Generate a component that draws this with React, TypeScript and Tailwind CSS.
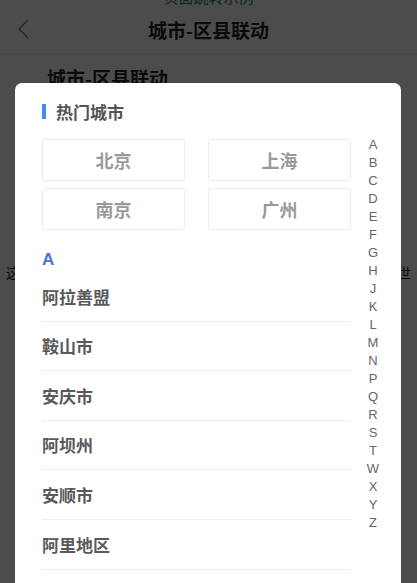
import React from "react";

const hot = ["北京", "上海", "南京", "广州"];
const cities = ["阿拉善盟", "鞍山市", "安庆市", "阿坝州", "安顺市", "阿里地区", "鞍山市"];
const letters = ["A","B","C","D","E","F","G","H","J","K","L","M","N","P","Q","R","S","T","W","X","Y","Z"];

export default function App() {
  return (
    <div className="relative w-[417px] h-[583px] overflow-hidden bg-white font-['Noto_Sans_CJK_SC','Liberation_Sans',sans-serif]">
      {/* background page */}
      <div className="flex flex-col">
        <div className="h-[6px] overflow-hidden flex justify-center">
          <span className="-mt-[12px] text-[15px] text-[#2a8a3a] leading-[18px]">页面跳转示例</span>
        </div>
        <div className="relative h-[49px] flex items-center justify-center border-b border-[#eee]">
          <svg className="absolute left-[16px] top-[12px]" width="14" height="22" viewBox="0 0 14 22" fill="none">
            <path d="M12 2 L3 11 L12 20" stroke="#777" strokeWidth="1.3" />
          </svg>
          <span className="text-[19px] font-bold text-[#222]">城市-区县联动</span>
        </div>
        <div className="pl-[47px] pt-[10px] text-[19px] font-bold text-[#222] leading-[26px]">城市-区县联动</div>
        <div className="mt-[171px] px-[6px] h-[20px] overflow-hidden text-[14px] leading-[20px] text-[#222] text-justify [text-align-last:justify]">
          这是一个城市区县联动的组件示例选择城市之后再选择区县的世
        </div>
      </div>

      {/* overlay */}
      <div className="absolute inset-0 bg-black/70" />

      {/* modal */}
      <div className="absolute left-[15px] top-[83px] w-[386px] h-[520px] bg-white rounded-[7px] pl-[27px] pt-[20px] flex">
        <div className="w-[309px] flex flex-col">
          <div className="h-[16px] flex items-center">
            <div className="w-[4px] h-[15px] bg-[#3f8cf4]" />
            <span className="ml-[10px] text-[17px] font-bold text-[#555] leading-none">热门城市</span>
          </div>
          <div className="mt-[20px] grid grid-cols-[143px_143px] gap-x-[23px] gap-y-[7px]">
            {hot.map((c) => (
              <div key={c} className="h-[42px] border border-[#ebebeb] rounded-[3px] flex items-center justify-center text-[18px] font-bold text-[#9a9a9a]">
                {c}
              </div>
            ))}
          </div>
          <div className="mt-[18px] h-[24px] flex items-center text-[17px] font-bold text-[#4872d8] font-['Liberation_Sans',sans-serif]">A</div>
          {cities.map((c, i) => (
            <div key={i} className="h-[49.6px] shrink-0 border-b border-[#eeeeee] flex items-center text-[17px] font-bold text-[#5a5a5a]">
              {c}
            </div>
          ))}
        </div>
        <div className="w-[44px] pt-[33px] flex flex-col items-center">
          {letters.map((l) => (
            <div key={l} className="h-[18px] leading-[18px] text-[13px] text-[#666] font-['Liberation_Sans',sans-serif]">{l}</div>
          ))}
        </div>
      </div>
    </div>
  );
}
